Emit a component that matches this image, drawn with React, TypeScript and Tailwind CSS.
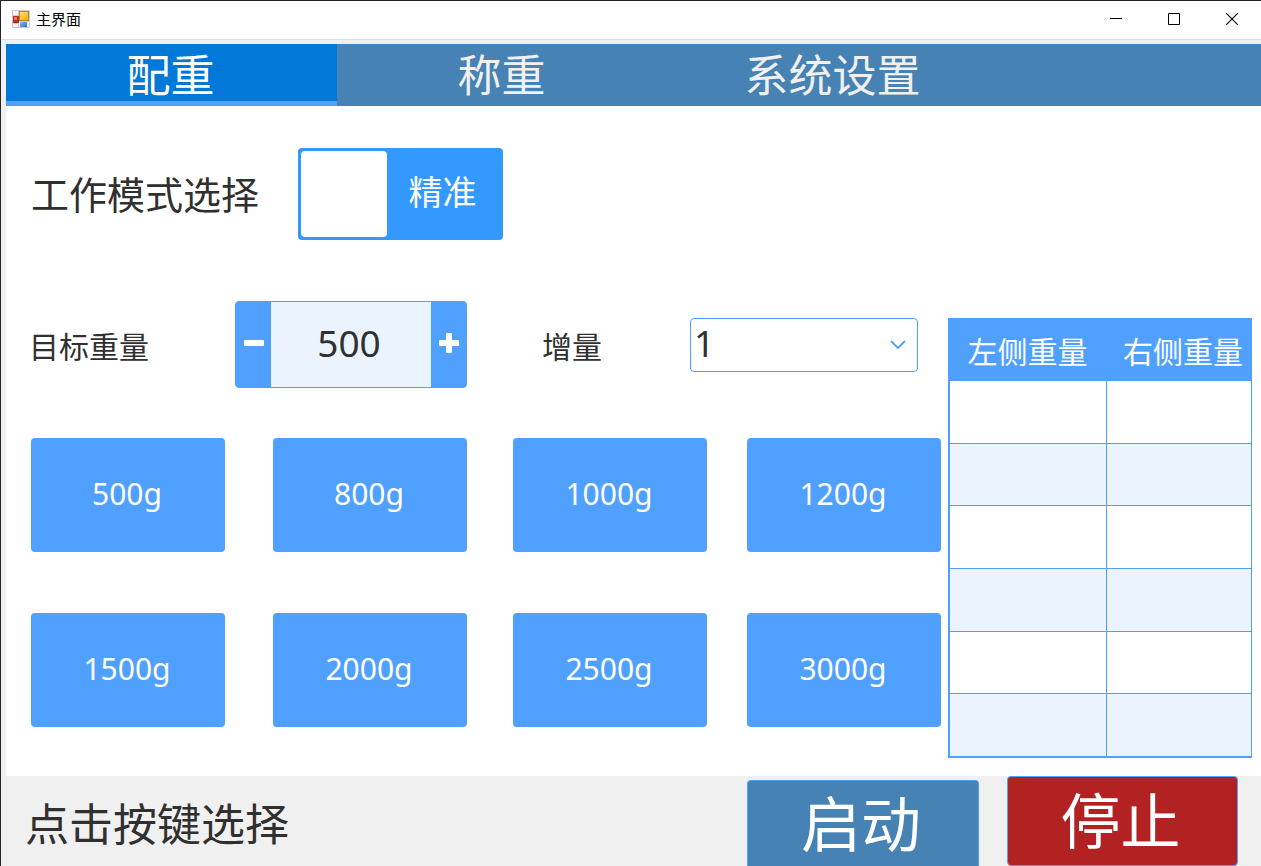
import { useState } from "react";

const presets = ["500g", "800g", "1000g", "1200g", "1500g", "2000g", "2500g", "3000g"];
const tabs = ["配重", "称重", "系统设置"];
const rows = [0, 1, 2, 3, 4, 5];

function AppIcon() {
  return (
    <svg width="18" height="18" viewBox="0 0 18 18" aria-hidden="true">
      <defs>
        <linearGradient id="gold" x1="0" y1="0" x2="1" y2="1">
          <stop offset="0" stopColor="#ffe680" />
          <stop offset="1" stopColor="#eba900" />
        </linearGradient>
        <linearGradient id="blue" x1="0" y1="0" x2="1" y2="1">
          <stop offset="0" stopColor="#8fb8f5" />
          <stop offset="1" stopColor="#2a66d8" />
        </linearGradient>
      </defs>
      <rect x="0" y="0" width="18" height="18" rx="1" fill="#c9c9c9" />
      <path d="M1 1h5v4H1zM1 14h5v3H1zM15 12h2v5h-2zM7 12h1v5H7z" fill="#f4f4f4" />
      <rect x="1" y="6" width="6" height="7" fill="#b92b23" />
      <rect x="2" y="7" width="3" height="3" fill="#e0786f" />
      <rect x="7.500" y="1.500" width="9" height="9" fill="url(#gold)" stroke="#b98a1c" />
      <rect x="8" y="12" width="7" height="5" fill="url(#blue)" />
    </svg>
  );
}

function TitleBar() {
  const control = "flex h-full w-[58px] items-center justify-center text-black hover:bg-gray-200";
  return (
    <header className="flex h-[39px] items-center border-b border-[#dfe3e6] bg-white pb-0.5 pl-[11px]">
      <AppIcon />
      <h1 className="ml-1.5 flex-1 text-[15px] leading-5 text-black">主界面</h1>
      <button type="button" aria-label="最小化" className={control}>
        <svg width="12" height="12" viewBox="0 0 12 12"><path d="M0 5.500h12" stroke="currentColor" /></svg>
      </button>
      <button type="button" aria-label="最大化" className={control}>
        <svg width="12" height="12" viewBox="0 0 12 12"><path d="M.5.5h11v11H.5z" fill="none" stroke="currentColor" /></svg>
      </button>
      <button type="button" aria-label="关闭" className={control}>
        <svg width="12" height="12" viewBox="0 0 12 12"><path d="M.3.3l11.400 11.400M11.700.3L.3 11.700" stroke="currentColor" strokeWidth="1.100" /></svg>
      </button>
    </header>
  );
}

export default function App() {
  const [tab, setTab] = useState(0);
  const [precise, setPrecise] = useState(true);
  const [target, setTarget] = useState(500);
  const [step, setStep] = useState(1);

  return (
    <div className="flex min-h-screen flex-col border-t border-l border-[#252525] bg-[#f0f0f0] font-['Noto_Sans','Noto_Sans_CJK_SC',sans-serif] text-[#303030]">
      <TitleBar />
      <div className="flex flex-1 flex-col pt-1 pl-[5px]">
        <nav className="flex h-[62px] bg-[#4682b4]">
          {tabs.map((name, i) => (
            <button
              key={name}
              type="button"
              onClick={() => setTab(i)}
              className={
                i === tab
                  ? "w-[331px] border-b-5 border-[#50a0ff] bg-[#0078d7] pt-1 pr-0.5 text-[44px] leading-none text-white"
                  : "w-[331px] border-b-5 border-transparent pt-1 pr-0.5 text-[44px] leading-none text-[#f0f0f0]"
              }
            >
              {name}
            </button>
          ))}
        </nav>

        <main className="flex-1 bg-white pt-[42px] pr-[9px] pb-[18px] pl-[25px]">
          <div className="flex h-[92px] items-center">
            <span id="mode-label" className="w-[267px] text-[38px] leading-none">工作模式选择</span>
            <button
              type="button"
              role="switch"
              aria-checked={precise}
              aria-labelledby="mode-label"
              onClick={() => setPrecise(!precise)}
              className="flex h-[92px] w-[205px] items-center rounded-sm bg-[#3399ff] p-[3px]"
            >
              <span className="h-full w-[86px] rounded-sm bg-white" />
              <span className="flex-1 pr-0.5 pb-1 text-[34px] leading-none text-white">精准</span>
            </button>
          </div>

          <div className="mt-[61px] flex items-start gap-[7px]">
            <div className="flex-1">
              <div className="flex h-[87px] items-center">
                <label htmlFor="target" className="-ml-0.5 w-[206px] pt-1 text-[30px] leading-none">目标重量</label>
                <div className="flex h-full w-[232px] overflow-hidden rounded-sm border border-[#50a0ff] bg-[#50a0ff]">
                  <button type="button" aria-label="减少" onClick={() => setTarget(target - step)} className="flex w-[35px] items-center justify-center pb-1 text-white">
                    <svg width="20" height="20" viewBox="0 0 20 20"><rect y="7" width="20" height="6" rx="1" fill="currentColor" /></svg>
                  </button>
                  <input
                    id="target"
                    type="text"
                    inputMode="numeric"
                    value={target}
                    onChange={(e) => setTarget(Number(e.target.value) || 0)}
                    className="min-w-0 flex-1 bg-[#ebf3ff] pr-1 pb-1 text-center text-[37px] leading-none outline-none"
                  />
                  <button type="button" aria-label="增加" onClick={() => setTarget(target + step)} className="flex w-[35px] items-center justify-center pb-1 text-white">
                    <svg width="20" height="20" viewBox="0 0 20 20"><path d="M8 0h4q1 0 1 1v6h6q1 0 1 1v4q0 1-1 1h-6v6q0 1-1 1H8q-1 0-1-1v-6H1q-1 0-1-1V8q0-1 1-1h6V1q0-1 1-1z" fill="currentColor" /></svg>
                  </button>
                </div>
                <label htmlFor="step" className="ml-[75px] w-[148px] pt-1 text-[30px] leading-none">增量</label>
                <div className="grid w-[228px] items-center">
                  <select
                    id="step"
                    value={step}
                    onChange={(e) => setStep(Number(e.target.value))}
                    className="col-start-1 row-start-1 h-[54px] w-full appearance-none rounded-sm border border-[#50a0ff] bg-white pb-0.5 pl-[3px] text-[36px] leading-none outline-none"
                  >
                    <option value={1}>1</option>
                    <option value={5}>5</option>
                    <option value={10}>10</option>
                  </select>
                  <svg className="pointer-events-none col-start-1 row-start-1 mr-3 justify-self-end" width="16" height="10" viewBox="0 0 16 10">
                    <path d="M1 1l7 7 7-7" fill="none" stroke="#50a0ff" strokeWidth="1.800" />
                  </svg>
                </div>
              </div>

              <div className="mt-[50px] grid grid-cols-[242fr_240fr_234fr_194fr] gap-y-[61px]">
                {presets.map((p) => (
                  <button
                    key={p}
                    type="button"
                    onClick={() => setTarget(parseInt(p, 10))}
                    className="h-[114px] w-[194px] rounded-sm bg-[#50a0ff] pr-0.5 pb-0.5 text-[30px] leading-none text-white hover:bg-[#73b3ff]"
                  >
                    {p}
                  </button>
                ))}
              </div>
            </div>

            <table className="mt-[17px] h-[440px] w-[304px] table-fixed border-separate border-spacing-0 border-t border-r border-b-2 border-l-2 border-[#50a0ff]">
              <thead>
                <tr className="h-[61px] bg-[#50a0ff] text-[30px] leading-none text-white">
                  <th scope="col" className="w-[157px] p-0 pt-1 pr-0.5 font-normal">左侧重量</th>
                  <th scope="col" className="p-0 pt-1 pl-2 font-normal">右侧重量</th>
                </tr>
              </thead>
              <tbody>
                {rows.map((r) => (
                  <tr key={r} className="odd:bg-white even:bg-[#ebf3ff]">
                    <td className="border-t border-r border-[#50a0ff]" />
                    <td className="border-t border-[#50a0ff]" />
                  </tr>
                ))}
              </tbody>
            </table>
          </div>
        </main>

        <footer className="flex h-[90px] items-end pr-[23px] pl-[19px]">
          <p className="flex-1 self-center pt-1.5 text-[44px] leading-none">点击按键选择</p>
          <button type="button" className="h-[86px] w-[232px] rounded-t-sm border border-b-0 border-[#50a0ff] bg-[#4682b4] pr-1 text-[60px] leading-none text-white">
            启动
          </button>
          <button type="button" className="ml-[28px] h-[90px] w-[231px] rounded-sm border border-[#50a0ff] bg-[#b22222] pr-1 text-[60px] leading-none text-white">
            停止
          </button>
        </footer>
      </div>
    </div>
  );
}
